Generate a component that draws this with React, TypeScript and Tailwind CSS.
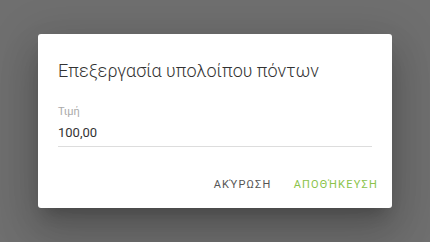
import { useState } from "react";

export default function App() {
  const [value, setValue] = useState("100,00");

  return (
    <div
      className="w-[430px] h-[242px] bg-[#6f6f6f] flex items-center justify-center"
      style={{ fontFamily: "Roboto, 'Liberation Sans', sans-serif" }}
    >
      <div className="w-[354px] h-[174px] bg-white rounded-[3px] shadow-[0_11px_15px_-7px_rgba(0,0,0,0.2),0_24px_38px_3px_rgba(0,0,0,0.14),0_9px_46px_8px_rgba(0,0,0,0.12)] flex flex-col">
        <h2 className="pt-[23px] px-[20px] text-[18px] leading-[28px] font-light text-[#333]">
          Επεξεργασία υπολοίπου πόντων
        </h2>

        {/* Field */}
        <div className="px-[20px] pt-[19px]">
          <label className="block text-[11px] leading-[16px] text-[#aaa]">Τιμή</label>
          <input
            value={value}
            onChange={(e) => setValue(e.target.value)}
            className="w-full text-[13px] leading-[20px] h-[20px] text-[#333] outline-none mb-[3px]"
          />
          <div className="h-px bg-[#ddd]" />
        </div>

        {/* Actions */}
        <div className="mt-auto flex justify-end items-center gap-[6px] pr-[6px] pb-[5px]">
          <button className="h-[36px] px-[8px] text-[11px] leading-[16px] tracking-[1.2px] text-[#555]">
            ΑΚΎΡΩΣΗ
          </button>
          <button className="h-[36px] px-[8px] text-[11px] leading-[16px] tracking-[1.2px] text-[#8bc34a]">
            ΑΠΟΘΉΚΕΥΣΗ
          </button>
        </div>
      </div>
    </div>
  );
}
